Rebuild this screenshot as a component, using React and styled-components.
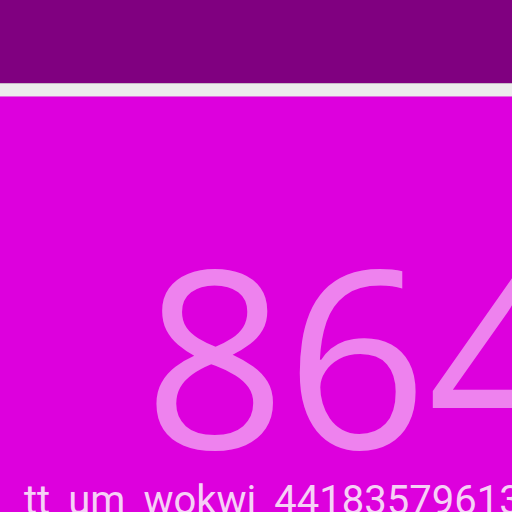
import React from 'react';
import styled, { createGlobalStyle } from 'styled-components';

const GlobalStyle = createGlobalStyle`
  html, body {
    margin: 0;
    padding: 0;
    width: 512px;
    height: 512px;
    overflow: hidden;
    background: #dd00dd;
  }
`;

const Page = styled.div`
  display: flex;
  flex-direction: column;
  width: 512px;
  height: 512px;
  overflow: hidden;
`;

const TopBar = styled.div`
  height: 83px;
  background-color: #800080;
`;

const Divider = styled.div`
  height: 12px;
  background-color: #ececec;
  border-top: 1px solid #c8b8c8;
  border-bottom: 1px solid #e070e0;
`;

const Display = styled.div`
  flex: 1;
  display: flex;
  flex-direction: column;
  background-color: #dd00dd;
  overflow: hidden;
  white-space: nowrap;
`;

const BigNumber = styled.div`
  font-family: 'Open Sans', sans-serif;
  font-size: 248px;
  line-height: 248px;
  color: #ee82ee;
  padding-left: 144px;
  margin-top: 132px;
  height: 248px;
`;

const Caption = styled.div`
  font-family: Roboto, sans-serif;
  font-size: 40px;
  color: #f6d0f6;
  padding-left: 24px;
`;

export default function App() {
  return (
    <Page>
      <GlobalStyle />
      <TopBar />
      <Divider />
      <Display>
        <BigNumber>8642</BigNumber>
        <Caption>tt_um_wokwi_441835796137783297</Caption>
      </Display>
    </Page>
  );
}
